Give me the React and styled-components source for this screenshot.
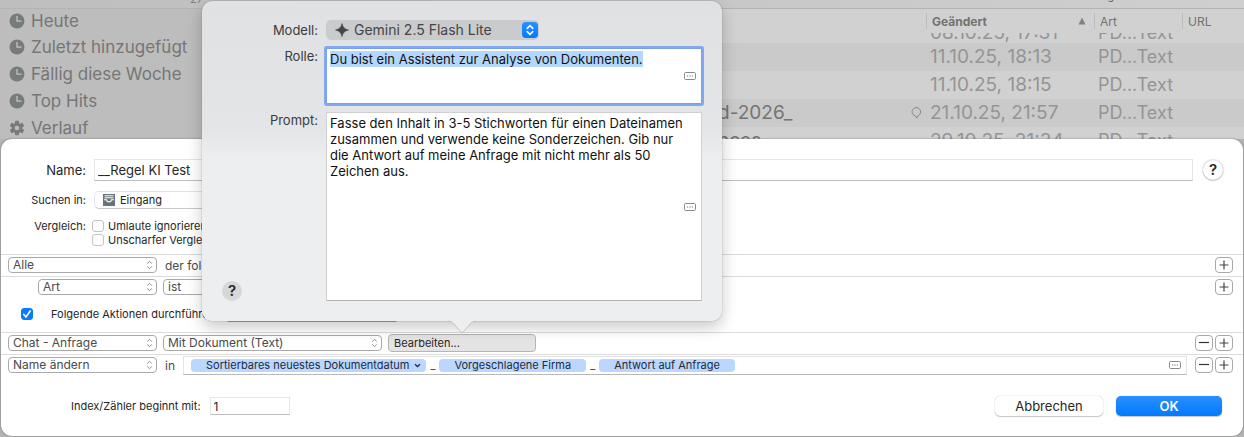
import React, { useEffect, useRef } from 'react';
import styled, { createGlobalStyle, css } from 'styled-components';

const GlobalStyle = createGlobalStyle`
* {
    box-sizing: border-box;
}

body {
    margin: 0;
    background: #b4b4b4;
    font-family: Inter, "Liberation Sans", sans-serif;
    font-size: 11px;
    color: #262626;
}

button, input, select, textarea {
    font: inherit;
    color: inherit;
    margin: 0;
}
`;

const Window = styled.div`
position: relative;
display: flex;
flex-direction: column;
min-height: 100vh;
overflow: hidden;
`;

/* library behind the sheet */

const Library = styled.div`
display: flex;
flex-direction: column;
max-height: 139px;
overflow: hidden;
color: #808080;
background: #d1d1d1;
`;

const Toolbar = styled.div`
display: flex;
flex: 0 0 9px;
align-items: flex-end;
justify-content: space-between;
padding: 0 130px 2px 190px;
overflow: hidden;
background: linear-gradient(90deg, #bebebe, #cfcfcf);
border-bottom: 1px solid #b3b3b3;
font-size: 11px;
line-height: 14px;
`;

const ToolbarTitle = styled.span`
padding-bottom: 3px;
color: #5c5c5c;
`;

const LibraryBody = styled.div`
display: flex;
`;

const Sidebar = styled.ul`
flex: 0 0 240px;
margin: 0;
padding: 0;
list-style: none;
background: #bdbdbd;
`;

const SidebarItem = styled.li`
display: flex;
align-items: center;
gap: 6px;
height: 27px;
padding-left: 9px;
font-size: 17px;
color: #767676;

&:first-child {
    height: 24px;
}
`;

const FileTable = styled.table`
flex: 1;
table-layout: fixed;
border-collapse: collapse;
`;

const HeadCell = styled.th`
width: ${({ $width }) => $width || 'auto'};
height: 24px;
padding: 0 8px 0 0;
text-align: left;
font-size: 12px;
font-weight: ${({ $sorted }) => ($sorted ? 700 : 400)};
color: #727272;
`;

const HeadInner = styled.div`
display: flex;
align-items: center;
justify-content: space-between;
height: 16px;
padding-left: 5px;
border-left: 1px solid #bdbdbd;
`;

const FileRow = styled.tr`
background: ${({ $dark }) => ($dark ? '#cacaca' : '#d1d1d1')};
`;

const FileCell = styled.td`
padding: 0 0 0 4px;
font-size: ${({ $kind }) => ($kind ? '18px' : '19px')};
white-space: nowrap;
color: #959595;
`;

const CellText = styled.div`
display: flex;
align-items: ${({ $scrolled }) => ($scrolled ? 'flex-end' : 'center')};
height: ${({ $scrolled }) => ($scrolled ? '10px' : '28px')};
line-height: 28px;
overflow: hidden;
${({ $scrolled }) => $scrolled && css`
    line-height: 20px;
`}
`;

const FileName = styled.div`
display: flex;
align-items: center;
justify-content: space-between;
flex: 1;
padding: 0 4px 0 474px;
color: #747474;
`;

/* sheet */

const Sheet = styled.form`
flex: 1;
display: flex;
flex-direction: column;
margin: 0 1px 1px;
background: #fff;
border-radius: 11px;
box-shadow: 0 0 2px rgba(0, 0, 0, 0.45);
`;

const Fields = styled.div`
display: flex;
flex-direction: column;
gap: 10px;
padding: 20px 20px 7px 0;
`;

const Field = styled.div`
display: flex;
align-items: ${({ $top }) => ($top ? 'flex-start' : 'center')};
gap: 8px;
`;

const FieldLabel = styled.label`
flex: 0 0 85px;
text-align: right;
font-size: ${({ $large }) => ($large ? '13px' : '11px')};
line-height: 14px;
`;

const TextInput = styled.input`
flex: ${({ $grow }) => ($grow ? '1' : '0 0 80px')};
min-width: 0;
height: ${({ $grow }) => ($grow ? '22px' : '18px')};
padding: 0 3px;
border: 1px solid #e6e6e6;
border-bottom-color: #bdbdbd;
background: #fff;
font-size: ${({ $grow }) => ($grow ? '13px' : '12px')};
outline: none;
`;

const HelpButton = styled.button`
display: flex;
align-items: center;
justify-content: center;
width: 20px;
height: 20px;
padding: 0;
border: 0;
border-radius: 50%;
background: ${({ $tinted }) => ($tinted ? '#d6d7d8' : '#fff')};
box-shadow: ${({ $tinted }) => ($tinted ? 'none' : '0 0 2px rgba(0, 0, 0, 0.4), 0 1px 1px rgba(0, 0, 0, 0.15)')};
font-size: 15px;
font-weight: 600;
line-height: 20px;
`;

const NameHelp = styled.div`
padding-left: 2px;
`;

const Checks = styled.div`
display: flex;
flex-direction: column;
margin-left: -2px;
`;

const CheckLabel = styled.label`
display: flex;
align-items: center;
gap: ${({ $wide }) => ($wide ? '18px' : '4px')};
height: 14px;
white-space: nowrap;
`;

const Checkbox = styled.input`
appearance: none;
width: 12px;
height: 12px;
border: 1px solid #c4c4c4;
border-radius: 3px;
background: #fff;

&:checked {
    border-color: #0a7aff;
    background: #0a7aff;
}
`;

const CheckBoxWrap = styled.span`
position: relative;
display: flex;

svg {
    position: absolute;
    inset: 0;
    pointer-events: none;
}
`;

const SelectWrap = styled.span`
position: relative;
display: flex;
flex: 0 0 ${({ $width }) => $width};
`;

const RuleSelect = styled.select`
appearance: none;
flex: 1;
min-width: 0;
height: 16px;
padding: 0 16px 0 4px;
border: 1px solid #a9a9a9;
border-radius: 4px;
background: #fff;
font-size: 12px;
line-height: 14px;
color: #4a4a4a;
outline: none;
`;

const FolderSelect = styled(RuleSelect)`
height: 18px;
padding-left: 25px;
border-color: #e2e2e2;
border-bottom-color: #c9c9c9;
border-radius: 5px;
font-size: 11px;
color: #262626;
`;

const SelectArrows = styled.svg`
position: absolute;
top: 3px;
right: 4px;
pointer-events: none;
`;

const SelectIcon = styled.span`
position: absolute;
top: 3px;
left: 9px;
display: flex;
pointer-events: none;
`;

const Rule = styled.div`
display: flex;
align-items: center;
height: 22px;
gap: 6px;
padding: 0 10px 1px ${({ $nested }) => ($nested ? '37px' : '7px')};
border-top: 1px solid #dcdcdc;
`;

const RuleText = styled.span`
padding: 0 2px;
font-size: 12px;
color: #4a4a4a;
white-space: nowrap;
`;

const RuleButtons = styled.span`
display: flex;
gap: 2px;
margin-left: auto;
`;

const SquareButton = styled.button`
display: flex;
align-items: center;
justify-content: center;
width: 18px;
height: 16px;
padding: 0;
border: 1px solid #a9a9a9;
border-radius: 4px;
background: #fff;
`;

const EditButton = styled.button`
flex: 0 0 148px;
height: 18px;
padding: 0 5px;
border: 1px solid #b5b5b5;
border-radius: 4px;
background: #e4e4e4;
text-align: left;
font-size: 11px;
`;

const ActionsHeader = styled.div`
display: flex;
align-items: center;
gap: 10px;
height: 32px;
margin-bottom: 2px;
padding-left: 20px;
`;

const TokenField = styled.div`
flex: 1;
display: flex;
align-items: center;
gap: 4px;
height: 19px;
padding: 0 5px 0 7px;
border: 1px solid #e3e3e3;
border-bottom-color: #b8b8b8;
color: #4a4a4a;
margin-right: 2px;
`;

const Token = styled.span`
display: flex;
align-items: center;
gap: 5px;
height: 13px;
padding: 0 ${({ $menu }) => ($menu ? '5px' : '15px')} 0 15px;
border-radius: 4px;
background: #bbd7ff;
color: #1f2a3a;
white-space: nowrap;
`;

const MoreButton = styled.button`
display: flex;
padding: 0;
border: 0;
background: none;
margin-left: auto;
`;

const Footer = styled.div`
display: flex;
align-items: center;
gap: 9px;
padding: 20px 21px 19px 70px;
`;

const FooterButtons = styled.div`
display: flex;
gap: 13px;
margin-left: auto;
`;

const PushButton = styled.button`
width: ${({ $primary }) => ($primary ? '106px' : '108px')};
height: 20px;
padding: 0;
border: 0;
border-radius: 5px;
font-size: 13px;
font-weight: ${({ $primary }) => ($primary ? 600 : 400)};
color: ${({ $primary }) => ($primary ? '#fff' : '#262626')};
background: ${({ $primary }) => ($primary ? 'linear-gradient(#2a8fff, #007aff)' : '#fff')};
box-shadow: 0 0 1px rgba(0, 0, 0, 0.35), 0 1px 1px rgba(0, 0, 0, 0.2);
`;

/* popover */

const Popover = styled.section`
position: absolute;
top: 1px;
left: 202px;
display: grid;
grid-template-columns: 116px 376px;
column-gap: 8px;
width: 520px;
padding: 19px 20px 20px 0;
border-radius: 10px;
background: linear-gradient(#dfe1e3, #e3e5e7 40%, #edeef0 50%, #edeef0);
box-shadow: 0 0 1px rgba(0, 0, 0, 0.6), 0 6px 16px rgba(0, 0, 0, 0.22);
`;

const PopoverArrow = styled.svg`
position: absolute;
top: 319px;
left: 246px;
`;

const PopoverLabel = styled.label`
padding-top: ${({ $offset }) => $offset || '0'};
text-align: right;
font-size: 13px;
line-height: 16px;
color: #3b3b3b;
`;

const ModelWrap = styled(SelectWrap)`
width: 213px;
`;

const ModelSelect = styled(RuleSelect)`
height: 20px;
padding: 0 24px 0 28px;
border: 0;
border-radius: 5px;
background: #c9cbcc;
font-size: 14px;
color: #454545;
`;

const ModelArrows = styled.span`
position: absolute;
top: 2px;
right: 1px;
display: flex;
align-items: center;
justify-content: center;
width: 16px;
height: 16px;
border-radius: 4px;
background: linear-gradient(#2a8fff, #007aff);
pointer-events: none;
`;

const TextBox = styled.div`
display: flex;
align-items: center;
height: ${({ $height }) => $height};
margin-top: 8px;
padding-right: 5px;
border: 1px solid #d0d0d0;
border-bottom-color: #b3b3b3;
background: #fff;
${({ $focused }) => $focused && css`
    border-color: #78a0ee;
    box-shadow: 0 0 0 2px #82a8f0;
    border-radius: 1px;
`}
`;

const TextArea = styled.textarea`
flex: 1;
align-self: stretch;
padding: 2px 0 0 3px;
border: 0;
outline: none;
resize: none;
overflow: hidden;
background: transparent;
font-size: 13px;
line-height: 16px;
color: #111;

&::selection {
    background: #b3d7ff;
    color: #111;
}
`;

const PopoverHelp = styled.div`
padding-left: 20px;
`;

const PromptSide = styled.div`
display: flex;
flex-direction: column;
justify-content: space-between;
`;

const ClockIcon = () => (
    <svg width="16" height="16" viewBox="0 0 16 16" aria-hidden="true">
        <circle cx="8" cy="8" r="7.5" fill="#787b7b" />
        <path d="M8 3v5.2h4.5" fill="none" stroke="#c4c4c4" strokeWidth="1.3" />
    </svg>
);

const GearIcon = () => (
    <svg width="16" height="16" viewBox="0 0 16 16" aria-hidden="true">
        <g fill="#787b7b">
            {[0, 60, 120].map((angle) => (
                <rect key={angle} x="6" y="0.7" width="4" height="14.6" rx="0.8" transform={`rotate(${angle} 8 8)`} />
            ))}
            <circle cx="8" cy="8" r="5.3" />
        </g>
        <circle cx="8" cy="8" r="2.3" fill="#bdbdbd" />
    </svg>
);

const BalloonIcon = () => (
    <svg width="11" height="12" viewBox="0 0 11 12" aria-hidden="true">
        <path d="M4.6 9.1A4.3 4.3 0 1 1 6.8 8.9L5.8 11.2Z" fill="none" stroke="#8a8a8a" />
    </svg>
);

const SparkIcon = () => (
    <svg width="14" height="14" viewBox="0 0 14 14" aria-hidden="true">
        <path d="M7 .5Q8 6 13.5 7Q8 8 7 13.5Q6 8 .5 7Q6 6 7 .5Z" fill="#454545" stroke="#454545" strokeWidth=".6" />
    </svg>
);

const InboxIcon = () => (
    <svg width="12" height="12" viewBox="0 0 12 12" aria-hidden="true">
        <path d="M0 0h12v12H0z" fill="#68747c" />
        <path d="M1.5 1.8h9M1.5 3.8h9" stroke="#fff" strokeWidth="1" />
        <path d="M1 5.7h2.6C3.8 8.4 8.2 8.4 8.4 5.7H11" fill="none" stroke="#fff" strokeWidth="1.1" />
    </svg>
);

const MoreIcon = () => (
    <svg width="12" height="8" viewBox="0 0 12 8" aria-hidden="true">
        <rect x=".5" y=".5" width="11" height="7" rx="1.2" fill="none" stroke="#8a8a8a" />
        <path d="M3 4h1.2M5.4 4h1.2M7.8 4H9" stroke="#777" strokeWidth="1.2" />
    </svg>
);

const Arrows = () => (
    <SelectArrows width="7" height="10" viewBox="0 0 7 10" aria-hidden="true">
        <path d="M1.2 3.6 3.5 1.3 5.8 3.6M1.2 6.4 3.5 8.7 5.8 6.4" fill="none" stroke="#8b8b8b" />
    </SelectArrows>
);

const PopUp = ({ width, value, label }) => (
    <SelectWrap $width={width}>
        <RuleSelect aria-label={label} defaultValue={value}>
            <option>{value}</option>
        </RuleSelect>
        <Arrows />
    </SelectWrap>
);

const AddRemove = ({ removable }) => (
    <RuleButtons>
        {removable && (
            <SquareButton type="button" aria-label="Entfernen">
                <svg width="12" height="12" viewBox="0 0 12 12"><path d="M1 5.5h10" stroke="#333" strokeWidth="1.2" /></svg>
            </SquareButton>
        )}
        <SquareButton type="button" aria-label="Hinzufügen">
            <svg width="12" height="12" viewBox="0 0 12 12"><path d="M1.5 6h9M6 1.5v9" stroke="#444" strokeWidth="1.2" /></svg>
        </SquareButton>
    </RuleButtons>
);

const More = () => (
    <MoreButton type="button" aria-label="Platzhalter">
        <MoreIcon />
    </MoreButton>
);

const sidebarItems = ['Heute', 'Zuletzt hinzugefügt', 'Fällig diese Woche', 'Top Hits', 'Verlauf'];

const files = [
    { date: '08.10.25, 17:31', scrolled: true },
    { date: '11.10.25, 18:13' },
    { date: '11.10.25, 18:15' },
    { name: 'd-2026_', date: '21.10.25, 21:57', comment: true },
    { name: 'nces', date: '29.10.25, 21:34' },
];

const App = () => {
    const roleRef = useRef(null);

    useEffect(() => {
        roleRef.current.focus();
        roleRef.current.select();
    }, []);

    return (
        <Window>
            <GlobalStyle />

            <Library>
                <Toolbar>
                    <span>27</span>
                    <ToolbarTitle>g</ToolbarTitle>
                </Toolbar>
                <LibraryBody>
                    <Sidebar>
                        {sidebarItems.map((item) => (
                            <SidebarItem key={item}>
                                {item === 'Verlauf' ? <GearIcon /> : <ClockIcon />}
                                {item}
                            </SidebarItem>
                        ))}
                    </Sidebar>
                    <FileTable>
                        <thead>
                            <tr>
                                <HeadCell />
                                <HeadCell $width="168px" $sorted>
                                    <HeadInner>
                                        Geändert
                                        <svg width="8" height="8" viewBox="0 0 8 8"><path d="M4 .5 7.5 7.5h-7z" fill="#828282" /></svg>
                                    </HeadInner>
                                </HeadCell>
                                <HeadCell $width="88px"><HeadInner>Art</HeadInner></HeadCell>
                                <HeadCell $width="62px"><HeadInner>URL</HeadInner></HeadCell>
                            </tr>
                        </thead>
                        <tbody>
                            {files.map((file, index) => (
                                <FileRow key={file.date} $dark={index % 2 === 1}>
                                    <FileCell>
                                        <CellText $scrolled={file.scrolled}>
                                            <FileName>
                                                {file.name}
                                                {file.comment && <BalloonIcon />}
                                            </FileName>
                                        </CellText>
                                    </FileCell>
                                    <FileCell><CellText $scrolled={file.scrolled}>{file.date}</CellText></FileCell>
                                    <FileCell $kind><CellText $scrolled={file.scrolled}>PD...Text</CellText></FileCell>
                                    <FileCell />
                                </FileRow>
                            ))}
                        </tbody>
                    </FileTable>
                </LibraryBody>
            </Library>

            <Sheet onSubmit={(e) => e.preventDefault()}>
                <Fields>
                    <Field>
                        <FieldLabel htmlFor="name" $large>Name:</FieldLabel>
                        <TextInput id="name" $grow defaultValue="__Regel KI Test" />
                        <NameHelp><HelpButton type="button">?</HelpButton></NameHelp>
                    </Field>
                    <Field>
                        <FieldLabel htmlFor="folder">Suchen in:</FieldLabel>
                        <SelectWrap $width="240px">
                            <FolderSelect id="folder" defaultValue="Eingang">
                                <option>Eingang</option>
                            </FolderSelect>
                            <SelectIcon><InboxIcon /></SelectIcon>
                        </SelectWrap>
                    </Field>
                    <Field $top>
                        <FieldLabel as="span">Vergleich:</FieldLabel>
                        <Checks>
                            <CheckLabel><Checkbox type="checkbox" />Umlaute ignorieren</CheckLabel>
                            <CheckLabel><Checkbox type="checkbox" />Unscharfer Vergleich</CheckLabel>
                        </Checks>
                    </Field>
                </Fields>

                <Rule>
                    <PopUp width="149px" value="Alle" label="Bedingung" />
                    <RuleText>der folgenden</RuleText>
                    <AddRemove />
                </Rule>
                <Rule $nested>
                    <PopUp width="119px" value="Art" label="Kriterium" />
                    <PopUp width="149px" value="ist" label="Vergleich" />
                    <AddRemove />
                </Rule>

                <ActionsHeader>
                    <CheckLabel $wide>
                        <CheckBoxWrap>
                            <Checkbox type="checkbox" defaultChecked />
                            <svg width="12" height="12" viewBox="0 0 12 12">
                                <path d="M2.8 6.4 5 9 9.2 3" fill="none" stroke="#fff" strokeWidth="1.6" strokeLinecap="round" />
                            </svg>
                        </CheckBoxWrap>
                        Folgende Aktionen durchführen
                    </CheckLabel>
                    <PopUp width="174px" value="Bei Bedarf" label="Ausführung" />
                </ActionsHeader>

                <Rule>
                    <PopUp width="149px" value="Chat - Anfrage" label="Aktion" />
                    <PopUp width="219px" value="Mit Dokument (Text)" label="Modus" />
                    <EditButton type="button">Bearbeiten...</EditButton>
                    <AddRemove removable />
                </Rule>
                <Rule>
                    <PopUp width="149px" value="Name ändern" label="Aktion" />
                    <RuleText>in</RuleText>
                    <TokenField>
                        <Token $menu>
                            Sortierbares neuestes Dokumentdatum
                            <svg width="7" height="5" viewBox="0 0 7 5"><path d="M1 1.2 3.5 3.5 6 1.2" fill="none" stroke="#1f2a3a" strokeWidth="1.3" /></svg>
                        </Token>
                        _
                        <Token>Vorgeschlagene Firma</Token>
                        _
                        <Token>Antwort auf Anfrage</Token>
                        <More />
                    </TokenField>
                    <AddRemove removable />
                </Rule>

                <Footer>
                    <label htmlFor="counter">Index/Zähler beginnt mit:</label>
                    <TextInput id="counter" defaultValue="1" />
                    <FooterButtons>
                        <PushButton type="button">Abbrechen</PushButton>
                        <PushButton type="submit" $primary>OK</PushButton>
                    </FooterButtons>
                </Footer>
            </Sheet>

            <Popover>
                <PopoverLabel htmlFor="model" $offset="2px">Modell:</PopoverLabel>
                <ModelWrap $width="213px">
                    <ModelSelect id="model" defaultValue="Gemini 2.5 Flash Lite">
                        <option>Gemini 2.5 Flash Lite</option>
                    </ModelSelect>
                    <SelectIcon><SparkIcon /></SelectIcon>
                    <ModelArrows>
                        <svg width="8" height="12" viewBox="0 0 8 12">
                            <path d="M1.2 4.4 4 1.6 6.8 4.4M1.2 7.6 4 10.4 6.8 7.6" fill="none" stroke="#fff" strokeWidth="1.5" strokeLinecap="round" />
                        </svg>
                    </ModelArrows>
                </ModelWrap>

                <PopoverLabel htmlFor="role" $offset="8px">Rolle:</PopoverLabel>
                <TextBox $height="56px" $focused>
                    <TextArea ref={roleRef} id="role" defaultValue="Du bist ein Assistent zur Analyse von Dokumenten." />
                    <More />
                </TextBox>

                <PromptSide>
                    <PopoverLabel htmlFor="prompt" $offset="8px">Prompt:</PopoverLabel>
                    <PopoverHelp>
                        <HelpButton type="button" $tinted>?</HelpButton>
                    </PopoverHelp>
                </PromptSide>
                <TextBox $height="189px">
                    <TextArea
                        id="prompt"
                        defaultValue="Fasse den Inhalt in 3-5 Stichworten für einen Dateinamen zusammen und verwende keine Sonderzeichen. Gib nur die Antwort auf meine Anfrage mit nicht mehr als 50 Zeichen aus."
                    />
                    <More />
                </TextBox>

                <PopoverArrow width="28" height="14" viewBox="0 0 28 14" aria-hidden="true">
                    <path d="M0 0V1Q4 1 6 4L12.5 11.8Q14 13.4 15.5 11.8L22 4Q24 1 28 1V0Z" fill="#edeef0" />
                    <path d="M0 1.2Q4 1.2 6 4L12.5 11.8Q14 13.4 15.5 11.8L22 4Q24 1.2 28 1.2" fill="none" stroke="#b5b5b5" strokeWidth=".7" />
                </PopoverArrow>
            </Popover>
        </Window>
    );
};

export default App;
